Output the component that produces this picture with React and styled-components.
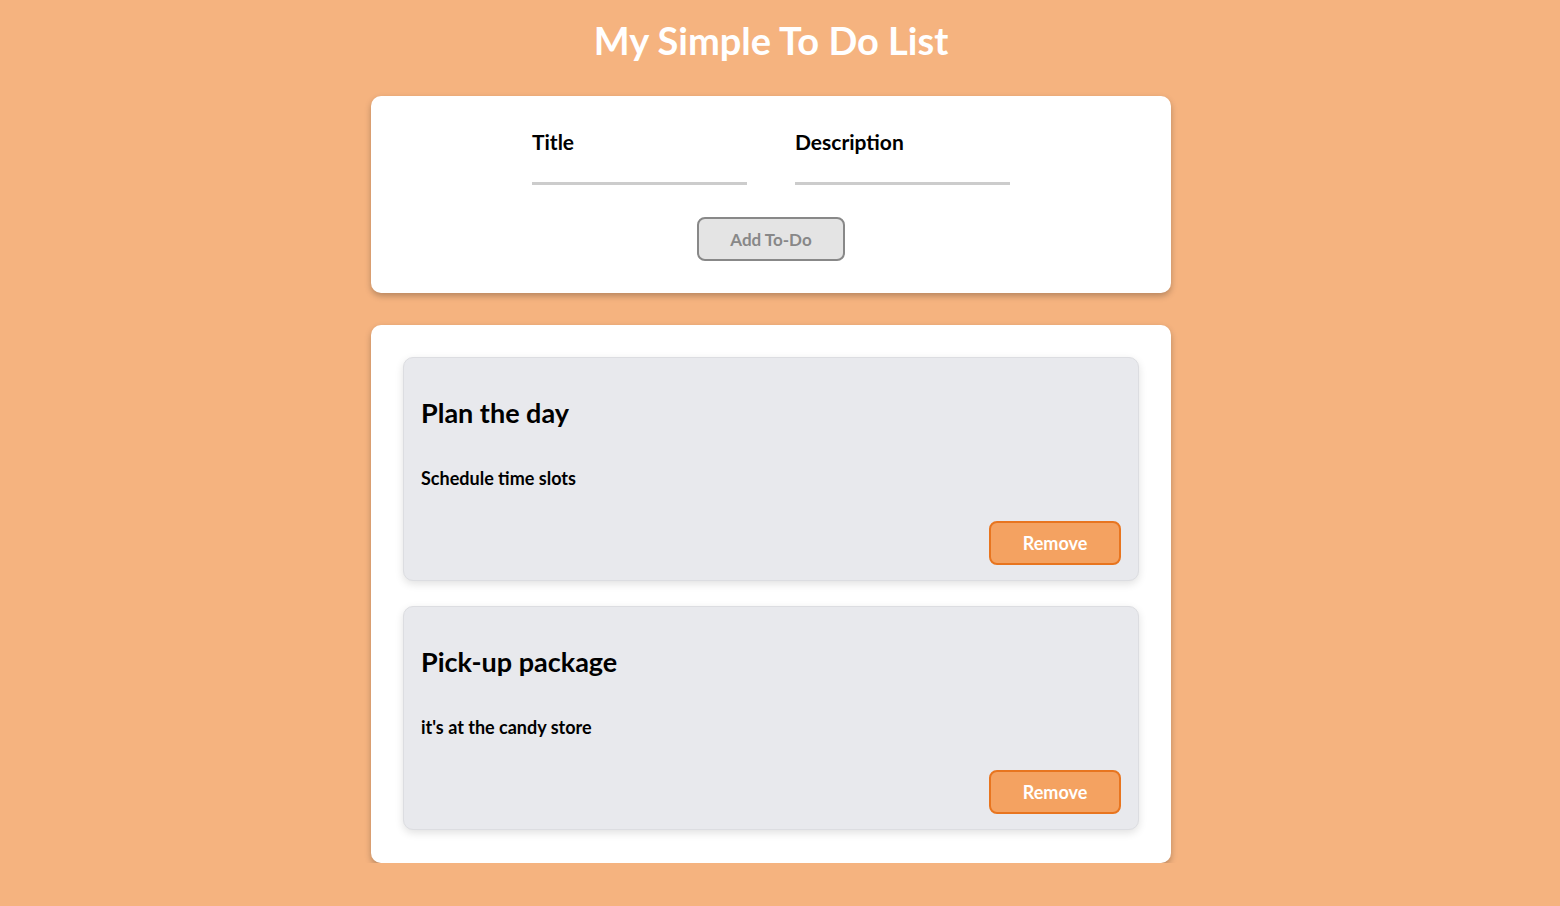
import styled, { createGlobalStyle } from "styled-components";

const todos = [
  { id: 1, title: "Plan the day", description: "Schedule time slots" },
  { id: 2, title: "Pick-up package", description: "it's at the candy store" },
];

const GlobalStyle = createGlobalStyle`
  * { box-sizing: border-box; }
  body {
    margin: 0;
    background: #f5b37f;
    font-family: Lato, "Liberation Sans", sans-serif;
  }
`;

export default function App() {
  return (
    <>
      <GlobalStyle />
      <Viewport>
        <Page>
          <Heading>My Simple To Do List</Heading>
          <Panel $padding="26px 32px 32px">
            <Fields>
              <Field>
                <Label>Title</Label>
                <Input />
              </Field>
              <Field>
                <Label>Description</Label>
                <Input />
              </Field>
            </Fields>
            <AddButton>Add To-Do</AddButton>
          </Panel>
          <Panel $padding="32px 32px 33px">
            <List>
              {todos.map((todo) => (
                <Card key={todo.id}>
                  <CardTitle>{todo.title}</CardTitle>
                  <CardText>{todo.description}</CardText>
                  <RemoveButton>Remove</RemoveButton>
                </Card>
              ))}
            </List>
          </Panel>
        </Page>
      </Viewport>
    </>
  );
}

// leaves room for the scrollbar gutter seen in the original
const Viewport = styled.div`
  width: calc(100% - 18px);
`;
const Page = styled.div`
  width: 800px;
  margin: 0 auto;
  padding-top: 17px;
  display: flex;
  flex-direction: column;
  gap: 32px;
`;
const Heading = styled.h1`
  margin: 0;
  text-align: center;
  color: #ffffff;
  font-size: 38px;
  line-height: 47px;
  font-weight: 700;
`;
const Panel = styled.div`
  background: #ffffff;
  border-radius: 10px;
  padding: ${(props) => props.$padding};
  box-shadow: 0 3px 6px rgba(0, 0, 0, 0.25);
`;
const Fields = styled.div`
  display: flex;
  justify-content: center;
  gap: 48px;
`;
const Field = styled.div`
  display: flex;
  flex-direction: column;
  width: 215px;
`;
const Label = styled.label`
  font-size: 21px;
  font-weight: 700;
  line-height: 40px;
  color: #000;
`;
const Input = styled.input`
  margin-top: 20px;
  border: none;
  border-bottom: 3px solid #cccccc;
  outline: none;
  background: transparent;
  padding: 0;
  height: 3px;
`;
const AddButton = styled.button`
  display: block;
  margin: 32px auto 0;
  width: 148px;
  height: 44px;
  background: #e4e4e4;
  border: 2px solid #888888;
  border-radius: 8px;
  color: #888888;
  font-family: inherit;
  font-size: 17px;
  font-weight: 700;
`;
const List = styled.div`
  display: flex;
  flex-direction: column;
  gap: 25px;
`;
const Card = styled.div`
  display: flex;
  flex-direction: column;
  height: 224px;
  padding: 27px 17px 15px;
  background: #e8e9ed;
  border: 1px solid #dcdde1;
  border-radius: 10px;
  box-shadow: 0 3px 8px rgba(0, 0, 0, 0.12);
`;
const CardTitle = styled.h2`
  margin: 0;
  font-size: 27px;
  line-height: 56px;
  font-weight: 700;
  color: #000;
`;
const CardText = styled.p`
  margin: 0;
  margin-top: 25px;
  font-size: 18px;
  line-height: 24px;
  font-weight: 700;
  color: #000;
`;
const RemoveButton = styled.button`
  margin-top: auto;
  align-self: flex-end;
  width: 132px;
  height: 44px;
  background: #f4a261;
  border: 2px solid #e8751f;
  border-radius: 8px;
  color: #ffffff;
  font-family: inherit;
  font-size: 18px;
  font-weight: 700;
`;
